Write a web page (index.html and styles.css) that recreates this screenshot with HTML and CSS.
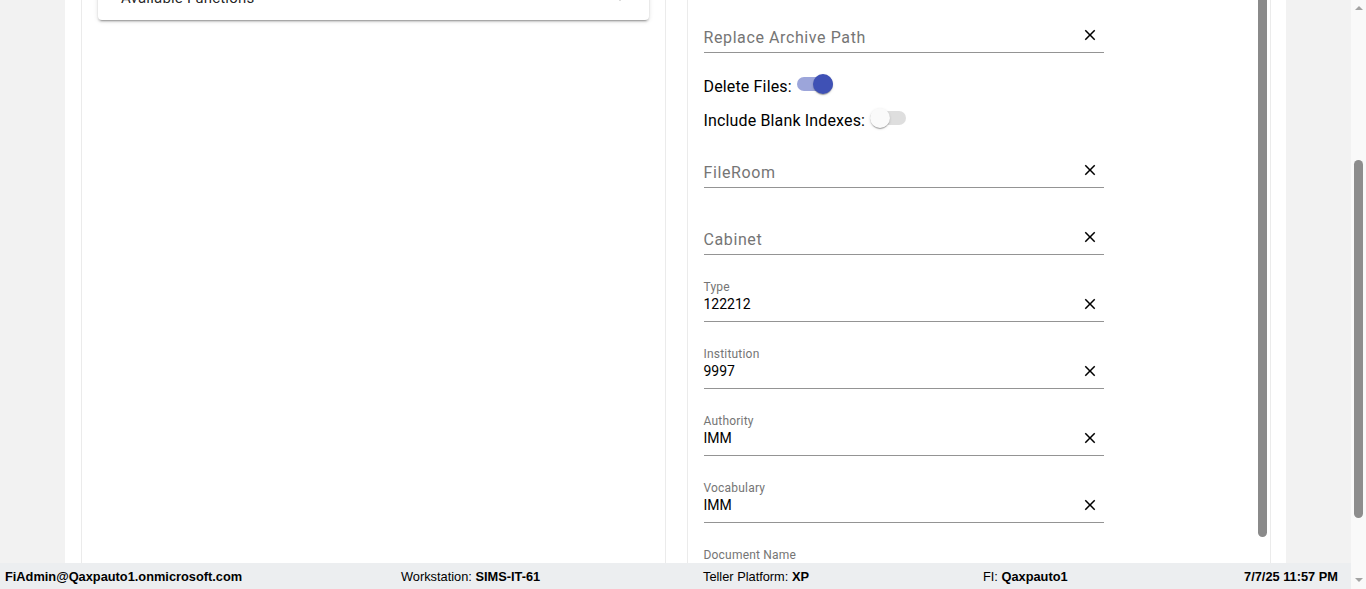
FILE: index.html
```html
<!DOCTYPE html>
<html>
<head>
	<title>Archive Settings</title>
	<link rel="stylesheet" href="styles.css">
</head>
<body>
<div class="app">
	<div class="main">
		<div class="shell">
			<section class="panel panel-left">
				<div class="card">
					<div class="card-head">
						<span>Available Functions</span>
						<i class="chevron"></i>
					</div>
				</div>
			</section>
			<section class="panel panel-right">
				<div class="form">
					<div class="field">
						<div class="field-label"></div>
						<div class="field-row">
							<span class="placeholder">Replace Archive Path</span>
							<svg class="clear" viewBox="0 0 24 24"><path d="M19 6.41L17.59 5 12 10.59 6.41 5 5 6.41 10.59 12 5 17.59 6.41 19 12 13.41 17.59 19 19 17.59 13.41 12z"/></svg>
						</div>
					</div>
					<div class="toggles">
						<div class="toggle-row">Delete Files:<span class="toggle on"><span class="bar"></span><span class="thumb"></span></span></div>
						<div class="toggle-row">Include Blank Indexes:<span class="toggle"><span class="bar"></span><span class="thumb"></span></span></div>
					</div>
					<div class="field">
						<div class="field-label"></div>
						<div class="field-row">
							<span class="placeholder">FileRoom</span>
							<svg class="clear" viewBox="0 0 24 24"><path d="M19 6.41L17.59 5 12 10.59 6.41 5 5 6.41 10.59 12 5 17.59 6.41 19 12 13.41 17.59 19 19 17.59 13.41 12z"/></svg>
						</div>
					</div>
					<div class="field">
						<div class="field-label"></div>
						<div class="field-row">
							<span class="placeholder">Cabinet</span>
							<svg class="clear" viewBox="0 0 24 24"><path d="M19 6.41L17.59 5 12 10.59 6.41 5 5 6.41 10.59 12 5 17.59 6.41 19 12 13.41 17.59 19 19 17.59 13.41 12z"/></svg>
						</div>
					</div>
					<div class="field">
						<div class="field-label">Type</div>
						<div class="field-row">
							<span class="value">122212</span>
							<svg class="clear" viewBox="0 0 24 24"><path d="M19 6.41L17.59 5 12 10.59 6.41 5 5 6.41 10.59 12 5 17.59 6.41 19 12 13.41 17.59 19 19 17.59 13.41 12z"/></svg>
						</div>
					</div>
					<div class="field">
						<div class="field-label">Institution</div>
						<div class="field-row">
							<span class="value">9997</span>
							<svg class="clear" viewBox="0 0 24 24"><path d="M19 6.41L17.59 5 12 10.59 6.41 5 5 6.41 10.59 12 5 17.59 6.41 19 12 13.41 17.59 19 19 17.59 13.41 12z"/></svg>
						</div>
					</div>
					<div class="field">
						<div class="field-label">Authority</div>
						<div class="field-row">
							<span class="value">IMM</span>
							<svg class="clear" viewBox="0 0 24 24"><path d="M19 6.41L17.59 5 12 10.59 6.41 5 5 6.41 10.59 12 5 17.59 6.41 19 12 13.41 17.59 19 19 17.59 13.41 12z"/></svg>
						</div>
					</div>
					<div class="field">
						<div class="field-label">Vocabulary</div>
						<div class="field-row">
							<span class="value">IMM</span>
							<svg class="clear" viewBox="0 0 24 24"><path d="M19 6.41L17.59 5 12 10.59 6.41 5 5 6.41 10.59 12 5 17.59 6.41 19 12 13.41 17.59 19 19 17.59 13.41 12z"/></svg>
						</div>
					</div>
					<div class="field">
						<div class="field-label">Document Name</div>
						<div class="field-row"></div>
					</div>
				</div>
				<div class="inner-thumb"></div>
			</section>
		</div>
	</div>
	<div class="page-scroll">
		<i class="arrow up"></i>
		<div class="page-thumb"></div>
		<i class="arrow down"></i>
	</div>
	<footer class="status">
		<b>FiAdmin@Qaxpauto1.onmicrosoft.com</b>
		<span>Workstation: <b>SIMS-IT-61</b></span>
		<span>Teller Platform: <b>XP</b></span>
		<span>FI: <b>Qaxpauto1</b></span>
		<b class="clock">7/7/25 11:57 PM</b>
	</footer>
</div>
</body>
</html>
```

FILE: styles.css
```css
html, body{
	margin: 0;
	height: 100%;
	overflow: hidden;
}
body{
	font-family: Roboto, "Liberation Sans", sans-serif;
	color: rgba(0,0,0,.87);
}
.app{
	display: grid;
	grid-template-columns: 1fr 15px;
	grid-template-rows: 563px 26px;
	height: 589px;
}
.main{
	background: #f2f2f2;
	display: flex;
	justify-content: center;
	overflow: hidden;
}
.shell{
	width: 1221px;
	box-sizing: border-box;
	background: #fff;
	display: flex;
	gap: 21px;
	padding: 0 15px 0 16px;
}
.panel{
	flex: 1;
	border-left: 1px solid #ebebeb;
	border-right: 1px solid #ebebeb;
	padding: 0 16px;
	overflow: hidden;
	position: relative;
}

/* left accordion */
.card{
	margin-top: -28px;
	height: 48px;
	background: #fff;
	border-radius: 4px;
	box-shadow: 0 3px 1px -2px rgba(0,0,0,.2), 0 2px 2px 0 rgba(0,0,0,.14), 0 1px 5px 0 rgba(0,0,0,.12);
}
.card-head{
	height: 48px;
	display: flex;
	align-items: center;
	justify-content: space-between;
	padding: 3px 25px 0 23px;
	box-sizing: border-box;
	font-size: 15px;
	letter-spacing: .2px;
}
.chevron{
	width: 6px;
	height: 6px;
	border-right: 2px solid rgba(0,0,0,.54);
	border-bottom: 2px solid rgba(0,0,0,.54);
	transform: rotate(45deg);
	margin-top: -5px;
}

/* right form */
.form{
	margin-top: -14px;
	width: 400px;
}
.field{
	height: 67px;
	box-sizing: border-box;
	border-bottom: 1px solid #949494;
	padding-top: 25px;
}
.field-label{
	height: 14px;
	font-size: 12px;
	line-height: 14px;
	color: #757575;
	letter-spacing: .2px;
}
.field-row{
	height: 20px;
	display: flex;
	align-items: center;
	justify-content: space-between;
}
.value{
	font-size: 14px;
	color: #000;
}
.placeholder{
	font-size: 16px;
	color: #757575;
	padding-top: 5px;
	letter-spacing: .6px;
}
.clear{
	width: 18px;
	height: 18px;
	margin-right: 5px;
	fill: #000;
}
.toggles{
	height: 68px;
	box-sizing: border-box;
	padding-top: 23px;
	display: flex;
	flex-direction: column;
	gap: 12px;
}
.toggle-row{
	height: 22px;
	line-height: 22px;
	font-size: 16px;
	letter-spacing: .15px;
	color: #000;
	display: flex;
	align-items: center;
}
.toggle{
	position: relative;
	width: 36px;
	height: 20px;
	margin-left: 5px;
	margin-top: -6px;
}
.toggle .bar{
	position: absolute;
	left: 0;
	top: 3px;
	width: 36px;
	height: 14px;
	border-radius: 7px;
	background: #dedede;
}
.toggle .thumb{
	position: absolute;
	left: 0;
	top: 0;
	width: 20px;
	height: 20px;
	border-radius: 50%;
	background: #fafafa;
	box-shadow: 0 2px 1px -1px rgba(0,0,0,.2), 0 1px 1px 0 rgba(0,0,0,.14), 0 1px 3px 0 rgba(0,0,0,.12);
}
.toggle.on .bar{
	background: #9ca5da;
}
.toggle.on .thumb{
	left: 16px;
	background: #3f51b5;
}
.inner-thumb{
	position: absolute;
	right: 3px;
	top: -6px;
	width: 9px;
	height: 543px;
	border-radius: 5px;
	background: #8a8a8a;
}

/* browser scrollbar */
.page-scroll{
	grid-row: 1 / 3;
	grid-column: 2;
	background: #f9f9f9;
	position: relative;
}
.page-thumb{
	position: absolute;
	left: 3px;
	top: 160px;
	width: 9px;
	height: 358px;
	border-radius: 5px;
	background: #8d8d8d;
}
.arrow{
	position: absolute;
	left: 4px;
	width: 0;
	height: 0;
	border-left: 4px solid transparent;
	border-right: 4px solid transparent;
}
.arrow.up{
	top: 6px;
	border-bottom: 4px solid #a3a3a3;
}
.arrow.down{
	bottom: 7px;
	border-top: 4px solid #a3a3a3;
}

/* status bar */
.status{
	grid-row: 2;
	grid-column: 1;
	background: #eceef0;
	display: grid;
	grid-template-columns: 396px 302px 280px 1fr auto;
	align-items: center;
	padding: 0 13px 0 5px;
	font-family: "Liberation Sans", Arial, sans-serif;
	font-size: 12.8px;
	color: #000;
}
.status .clock{
	justify-self: end;
}
```
